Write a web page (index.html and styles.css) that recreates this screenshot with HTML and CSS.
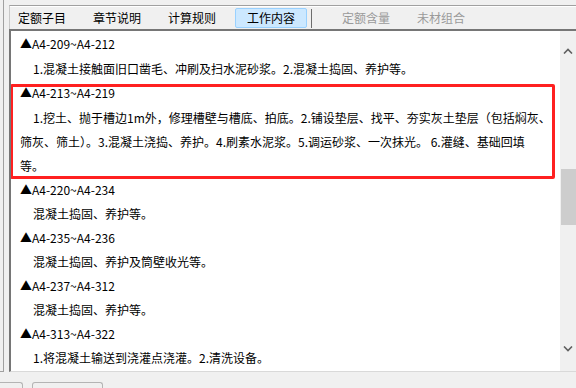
FILE: index.html
```html
<!DOCTYPE html>
<html lang="zh-CN">
<head>
    <meta charset="UTF-8">
    <meta name="viewport" content="width=device-width, initial-scale=1.0">
    <title>工作内容</title>
    <link rel="stylesheet" href="styles.css">
</head>
<body>
    <div class="window">
        <div class="side"></div>
        <div class="main">
            <div class="toolbar">
                <span class="tab">定额子目</span>
                <span class="tab">章节说明</span>
                <span class="tab">计算规则</span>
                <span class="tab active">工作内容</span>
                <span class="sep"></span>
                <span class="tab disabled">定额含量</span>
                <span class="tab disabled">未材组合</span>
            </div>
            <div class="panel">
                <div class="content">
                    <div class="code">▲A4-209~A4-212</div>
                    <div class="desc">1.混凝土接触面旧口凿毛、冲刷及扫水泥砂浆。2.混凝土捣固、养护等。</div>
                    <div class="marked">
                        <div class="code">▲A4-213~A4-219</div>
                        <div class="desc long">1.挖土、抛于槽边1m外，修理槽壁与槽底、拍底。2.铺设垫层、找平、夯实灰土垫层（包括焖灰、<br>筛灰、筛土）。3.混凝土浇捣、养护。4.刷素水泥浆。5.调运砂浆、一次抹光。 6.灌缝、基础回填<br>等。</div>
                    </div>
                    <div class="code">▲A4-220~A4-234</div>
                    <div class="desc">混凝土捣固、养护等。</div>
                    <div class="code">▲A4-235~A4-236</div>
                    <div class="desc">混凝土捣固、养护及筒壁收光等。</div>
                    <div class="code">▲A4-237~A4-312</div>
                    <div class="desc">混凝土捣固、养护等。</div>
                    <div class="code">▲A4-313~A4-322</div>
                    <div class="desc">1.将混凝土输送到浇灌点浇灌。2.清洗设备。</div>
                </div>
                <div class="scrollbar">
                    <svg class="arrow up" width="10" height="6" viewBox="0 0 10 6"><path d="M1 5.5 L5 1.5 L9 5.5" fill="none" stroke="#606060" stroke-width="1.6"/></svg>
                    <span class="thumb"></span>
                    <svg class="arrow down" width="10" height="6" viewBox="0 0 10 6"><path d="M1 0.5 L5 4.5 L9 0.5" fill="none" stroke="#606060" stroke-width="1.6"/></svg>
                </div>
            </div>
        </div>
    </div>
    <div class="bottom-tabs">
        <span class="btab first"></span>
        <span class="btab second"></span>
    </div>
</body>
</html>
```

FILE: styles.css
```css
body {
    margin: 0;
    width: 576px;
    height: 388px;
    overflow: hidden;
    background-color: #f0f0f0;
    font-family: "Noto Sans CJK SC", "Liberation Sans", sans-serif;
    font-size: 12px;
    color: #000;
}
.window {
    display: flex;
    height: 372px;
}
.side {
    width: 3px;
    height: 371px;
    border-right: 1px solid #a0a0a0;
    border-bottom: 1px solid #a0a0a0;
}
.main {
    flex: 1;
    margin-left: 5px;
    display: flex;
    flex-direction: column;
}
.toolbar {
    margin-top: 5px;
    height: 23px;
    border-top: 1px solid #a0a0a0;
    border-left: 1px solid #c8c8c8;
    box-shadow: inset 0 1px #fff;
    display: flex;
    align-items: center;
    gap: 11px;
    line-height: 18px;
}
.tab {
    padding: 0 8px;
    white-space: nowrap;
}
.tab.active {
    padding: 0 11px;
    background-color: #cce8ff;
    border: 1px solid #99d1ff;
    border-radius: 2px;
}
.tab.disabled {
    color: #9a9a9a;
}
.sep {
    width: 1px;
    height: 19px;
    background-color: #6d6d6d;
    margin: 1px 11px 0 -7px;
}
.panel {
    flex: 1;
    display: flex;
    border-top: 2px solid #767676;
    border-left: 2px solid #767676;
    border-bottom: 1px solid #d9d9d9;
    min-height: 0;
}
.content {
    flex: 1;
    background-color: #fff;
    padding: 1px 0 0 9px;
    overflow: hidden;
}
.code,
.desc {
    line-height: 24px;
    white-space: nowrap;
}
.desc {
    text-indent: 13px;
}
.content > .desc:nth-child(2) {
    margin-top: 1px;
}
.desc.long {
    margin-top: 1px;
}
.marked {
    position: relative;
}
.marked::after {
    content: "";
    position: absolute;
    top: 3px;
    bottom: -1px;
    left: -10px;
    right: 5px;
    border: 3px solid #ff2020;
    border-radius: 2px;
}
.scrollbar {
    width: 16px;
    background-color: #f0f0f0;
    display: flex;
    flex-direction: column;
    align-items: center;
}
.arrow {
    display: block;
}
.arrow.up {
    margin-top: 17px;
}
.thumb {
    align-self: stretch;
    margin: 115px 0 0 1px;
    height: 56px;
    background-color: #cdcdcd;
}
.arrow.down {
    margin-top: auto;
    margin-bottom: 19px;
}
.bottom-tabs {
    display: flex;
    padding-top: 10px;
}
.btab {
    height: 8px;
    border: 1px solid #b4b4b4;
    border-bottom: none;
    border-radius: 3px 3px 0 0;
    background-color: #f0f0f0;
}
.btab.first {
    width: 24px;
    margin-left: -3px;
}
.btab.second {
    width: 69px;
    margin-left: 9px;
}
```
